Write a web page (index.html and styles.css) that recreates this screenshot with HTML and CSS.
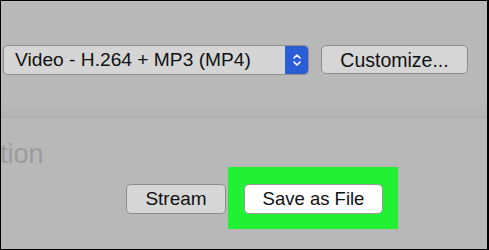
FILE: index.html
```html
<!DOCTYPE html>
<html lang="en">
<head>
<meta charset="UTF-8">
<title>Convert / Save</title>
<link rel="stylesheet" href="styles.css">
</head>
<body>
<div class="window">
  <div class="top">
    <div class="select">
      <span class="select-label">Video - H.264 + MP3 (MP4)</span>
      <span class="select-arrows">
        <svg width="10" height="16" viewBox="0 0 10 16">
          <path d="M2 6 L5 3 L8 6 M2 10 L5 13 L8 10" fill="none" stroke="#fff" stroke-width="1.6" stroke-linecap="round" stroke-linejoin="round"/>
        </svg>
      </span>
    </div>
    <button class="btn customize">Customize...</button>
  </div>
  <div class="bottom">
    <div class="section-title">tion</div>
    <div class="actions">
      <button class="btn stream">Stream</button>
      <div class="highlight">
        <button class="btn save">Save as File</button>
      </div>
    </div>
  </div>
</div>
</body>
</html>
```

FILE: styles.css
```css
body {margin:0;font-family:"Liberation Sans",Arial,sans-serif;}
.window {box-sizing:border-box;width:489px;height:250px;border:1px solid #000;border-right-width:2px;background:#b8b8b8;overflow:hidden;}
.top {box-sizing:border-box;height:117px;padding:44px 0 0 2px;display:flex;align-items:flex-start;border-bottom:1px solid #acacac;background:linear-gradient(#b9b9b9 0,#b9b9b9 85%,#b3b3b3 100%);}
.select {box-sizing:border-box;width:306px;height:30px;display:flex;border:1px solid #8e8e8e;border-radius:5px;background:#d5d5d5;overflow:hidden;}
.select-label {flex:1;padding-left:11px;font-size:19.2px;line-height:28px;color:#111;}
.select-arrows {width:23px;display:flex;align-items:center;justify-content:center;background:#2b5ed4;}
.btn {box-sizing:border-box;font-family:"Liberation Sans",Arial,sans-serif;font-size:19px;color:#111;border:1px solid #8c8c8c;border-radius:5px;background:#d6d6d6;padding:0;cursor:pointer;}
.customize {margin-left:12px;width:147px;height:29px;line-height:26px;font-size:19.5px;}
.bottom {padding-top:21px;}
.section-title {margin-left:-1px;font-size:27px;line-height:30px;color:#9b9b9b;height:30px;}
.actions {display:flex;align-items:flex-start;margin-top:-2px;padding-left:125px;}
.stream {margin-top:17px;width:100px;height:30px;}
.highlight {margin-left:2px;padding:17px 15px 15px 16px;background:#22f133;}
.save {width:139px;height:30px;background:#fff;border-color:#9a9a9a;font-size:18.5px;}
```
